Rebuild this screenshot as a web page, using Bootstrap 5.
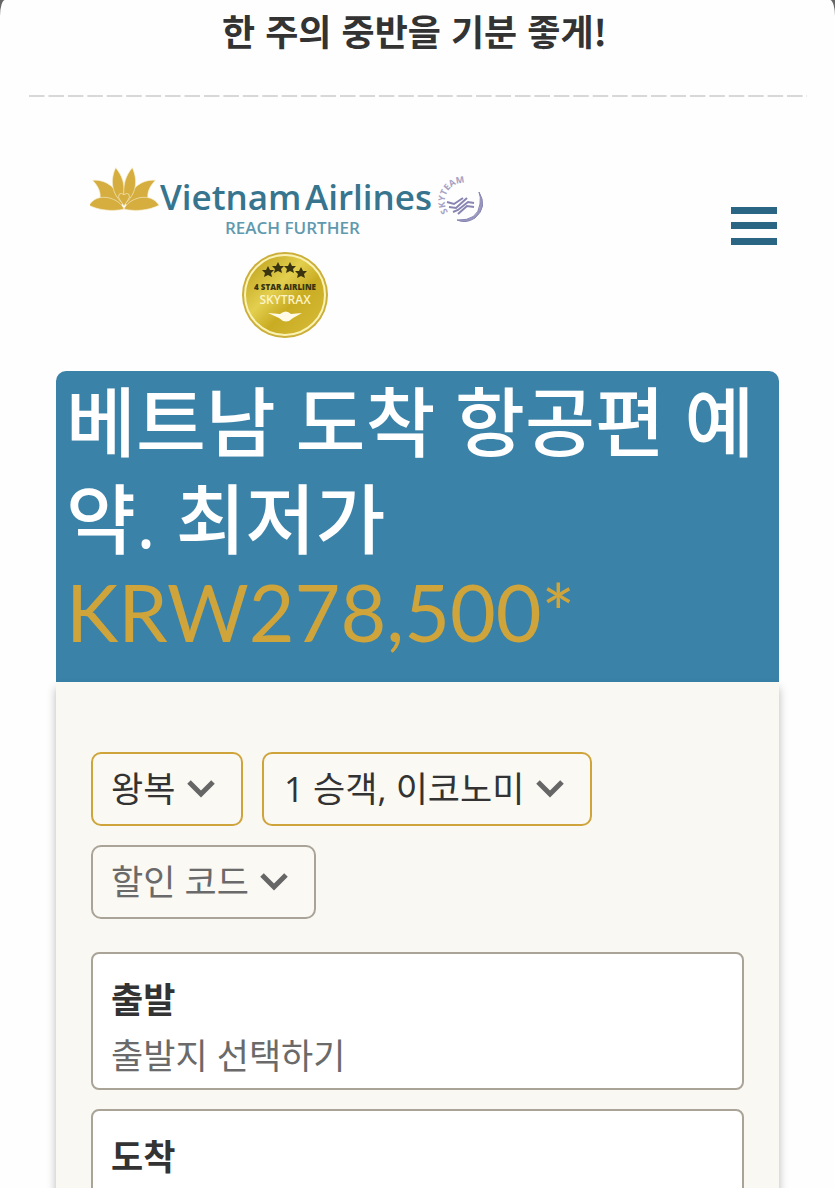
<!DOCTYPE html>
<html lang="ko">
<head>
<meta charset="utf-8">
<meta name="viewport" content="width=device-width, initial-scale=1">
<title>Vietnam Airlines</title>
<link href="https://cdn.jsdelivr.net/npm/bootstrap@5.3.0/dist/css/bootstrap.min.css" rel="stylesheet">
<style>
  :root { --teal: #2a6683; --gold: #cfa43b; --ink: #333; --soft: #6a6a6a; --rule: #aaa498; }
  body { background: #666; color: var(--ink); font-family: "Open Sans", "Noto Sans CJK KR", sans-serif; }
  .sheet { background: #fefefe; border-radius: 5px 5px 0 0 / 16px 16px 0 0; }
  .tagline { font-family: "Noto Sans CJK KR", sans-serif; font-size: 36px; line-height: 60px; padding-right: 6px; }
  .dash-rule { height: 2px; margin: 35px 28px 0 29px; background: linear-gradient(90deg, #d8d8d8 82%, transparent 0) 0 0 / 2.5% 2px repeat-x; }
  .site-head { padding: 69px 56px 29px 90px; }
  .brand-art { width: 400px; height: 176px; }
  .menu-btn { margin-top: 39px; padding: 2px; line-height: 0; }
  .booking { margin: 0 56px; border-radius: 10px 10px 0 0; }
  .offer { background: #3a82a8; border-radius: 10px 10px 0 0; padding: 2px 10px 28px; font-size: 76px; line-height: 97px; word-break: break-all; }
  .price { color: var(--gold); font-family: Lato, sans-serif; font-size: 79px; line-height: 89px; font-weight: 400; margin-bottom: -2px; }
  .panel { background: #f9f8f3; padding: 70px 35px 20px; box-shadow: 0 6px 9px rgba(0, 0, 0, .28); }
  .choices { gap: 19px; margin-bottom: 33px; }
  .choice {
    width: auto; height: 74px; padding: 0 65px 0 18px; font-size: 35px; line-height: 70px; color: var(--ink);
    border: 2px solid var(--gold); border-radius: 10px; background-color: #faf9f4;
    background-image: url("data:image/svg+xml,%3Csvg xmlns='http://www.w3.org/2000/svg' viewBox='0 0 28 18'%3E%3Cpath d='M2 2l12 12L26 2' fill='none' stroke='%23666' stroke-width='5'/%3E%3C/svg%3E");
    background-size: 28px 18px; background-position: right 26px center;
  }
  .choice-guests { padding-left: 20px; }
  .choice-plain { color: var(--soft); border-color: var(--rule); }
  .field { background: #fff; border: 2px solid var(--rule); border-radius: 8px; padding: 18px 18px 4px; font-size: 35px; line-height: 56px; }
  .field + .field { margin-top: 19px; }
  .field input { font-size: 35px; line-height: 56px; height: 56px; }
  .field input::placeholder { color: var(--soft); opacity: 1; }
</style>
</head>
<body>
<div class="sheet min-vh-100 overflow-hidden">
  <p class="tagline fw-bold text-center mb-0">한 주의 중반을 기분 좋게!</p>
  <div class="dash-rule"></div>

  <header class="site-head d-flex justify-content-between align-items-start">
    <a href="#" class="d-block" aria-label="Vietnam Airlines">
      <svg class="brand-art d-block" viewBox="0 0 400 176">
        <defs>
          <linearGradient id="coin" x1="0" y1="0" x2="1" y2="1">
            <stop offset="0" stop-color="#b99a16"/><stop offset=".4" stop-color="#e3cf4e"/>
            <stop offset=".6" stop-color="#c9ac22"/><stop offset="1" stop-color="#d8bd3c"/>
          </linearGradient>
          <path id="ring" d="M358 46A16 16 0 0 1 389 25"/>
        </defs>
        <!-- lotus -->
        <g transform="translate(-10 -8) scale(.3333)" fill="#d5ae3f" stroke="#f6ecc8" stroke-width="2">
          <path d="M38 67C64 64 88 76 104 94L130 134L120 148L60 124C64 100 52 82 38 67Z"/>
          <path d="M226 67C200 64 176 76 160 94L134 134L144 148L204 124C200 100 212 82 226 67Z"/>
          <path d="M107 29C128 54 136 80 132 128L124 132C92 102 92 62 107 29Z"/>
          <path d="M157 29C136 54 128 80 132 128L140 132C172 102 172 62 157 29Z"/>
          <path d="M27 142C40 122 60 115 84 119C108 124 126 138 132 153C97 162 55 156 27 142Z"/>
          <path d="M237 142C224 122 204 115 180 119C156 124 138 138 132 153C167 162 209 156 237 142Z"/>
          <path d="M118 108Q124 104 132 110Q140 104 146 108Q152 118 144 126L132 144L120 126Q112 118 118 108Z"/>
        </g>
        <text x="70" y="44" font-family="Open Sans, sans-serif" font-size="35" font-weight="600" fill="#37758f">Vietnam</text>
        <text x="215" y="44" font-family="Open Sans, sans-serif" font-size="35" font-weight="600" fill="#37758f">Airlines</text>
        <text x="135" y="68" font-family="Open Sans, sans-serif" font-size="17" font-weight="600" fill="#6099ae">REACH FURTHER</text>
        <!-- alliance mark -->
        <g fill="none" stroke="#8885b3">
          <path d="M389 26Q398 41 385 52Q376 58 367 54Q388 55 390 38Q391 31 389 26Z" fill="#9b98c0" stroke-width="1"/>
          <path d="M357 36l7 2l9-6M359 41l7 1l11-10M363 46l5-2l10-8l6 1M368 48l9-8l7 1" stroke-width="2"/>
        </g>
        <text font-family="Open Sans, sans-serif" font-size="9" font-weight="700" fill="#a5a2c4"><textPath href="#ring">SKYTEAM</textPath></text>
        <!-- four-star medal -->
        <circle cx="195" cy="129" r="43" fill="#cbaf3a"/>
        <circle cx="195" cy="129" r="40" fill="url(#coin)" stroke="#fbf3b5" stroke-width="2"/>
        <g fill="#39330f">
          <path id="star" d="M178 100l2 4l4 0l-3 3l1 4l-4-2l-4 2l1-4l-3-3l4 0Z"/>
          <use href="#star" x="10" y="-4"/><use href="#star" x="22" y="-4"/><use href="#star" x="33" y="1"/>
        </g>
        <text x="195" y="124" text-anchor="middle" font-family="Open Sans, sans-serif" font-size="8" font-weight="800" fill="#39330f">4 STAR AIRLINE</text>
        <text x="195" y="138" text-anchor="middle" font-family="Open Sans, sans-serif" font-size="12" font-weight="600" fill="#fbf3c8">SKYTRAX</text>
        <path d="M178 147l12 1q6-5 11 0l11-1l-9 5q-7 7-14 0Z" fill="#fffbe8"/>
      </svg>
    </a>
    <button type="button" class="menu-btn btn border-0" aria-label="메뉴">
      <svg width="46" height="38" viewBox="0 0 46 38" fill="#2a6683"><path d="M0 0h46v7H0zM0 15h46v7H0zM0 31h46v7H0z"/></svg>
    </button>
  </header>

  <main class="booking">
    <h1 class="offer text-white mb-0">베트남 도착 항공편 예약. 최저가 <span class="price d-block">KRW278,500*</span></h1>
    <form class="panel">
      <div class="choices d-flex flex-wrap">
        <select class="choice form-select" aria-label="여정"><option>왕복</option></select>
        <select class="choice choice-guests form-select" aria-label="승객"><option>1 승객, 이코노미</option></select>
        <select class="choice choice-plain form-select" aria-label="할인 코드"><option>할인 코드</option></select>
      </div>
      <div class="field">
        <label for="from" class="fw-bold d-block">출발</label>
        <input id="from" type="text" class="form-control-plaintext p-0" placeholder="출발지 선택하기">
      </div>
      <div class="field">
        <label for="to" class="fw-bold d-block">도착</label>
        <input id="to" type="text" class="form-control-plaintext p-0" placeholder="도착지 선택하기">
      </div>
    </form>
  </main>
</div>
<script src="https://cdn.jsdelivr.net/npm/bootstrap@5.3.0/dist/js/bootstrap.bundle.min.js"></script>
</body>
</html>
